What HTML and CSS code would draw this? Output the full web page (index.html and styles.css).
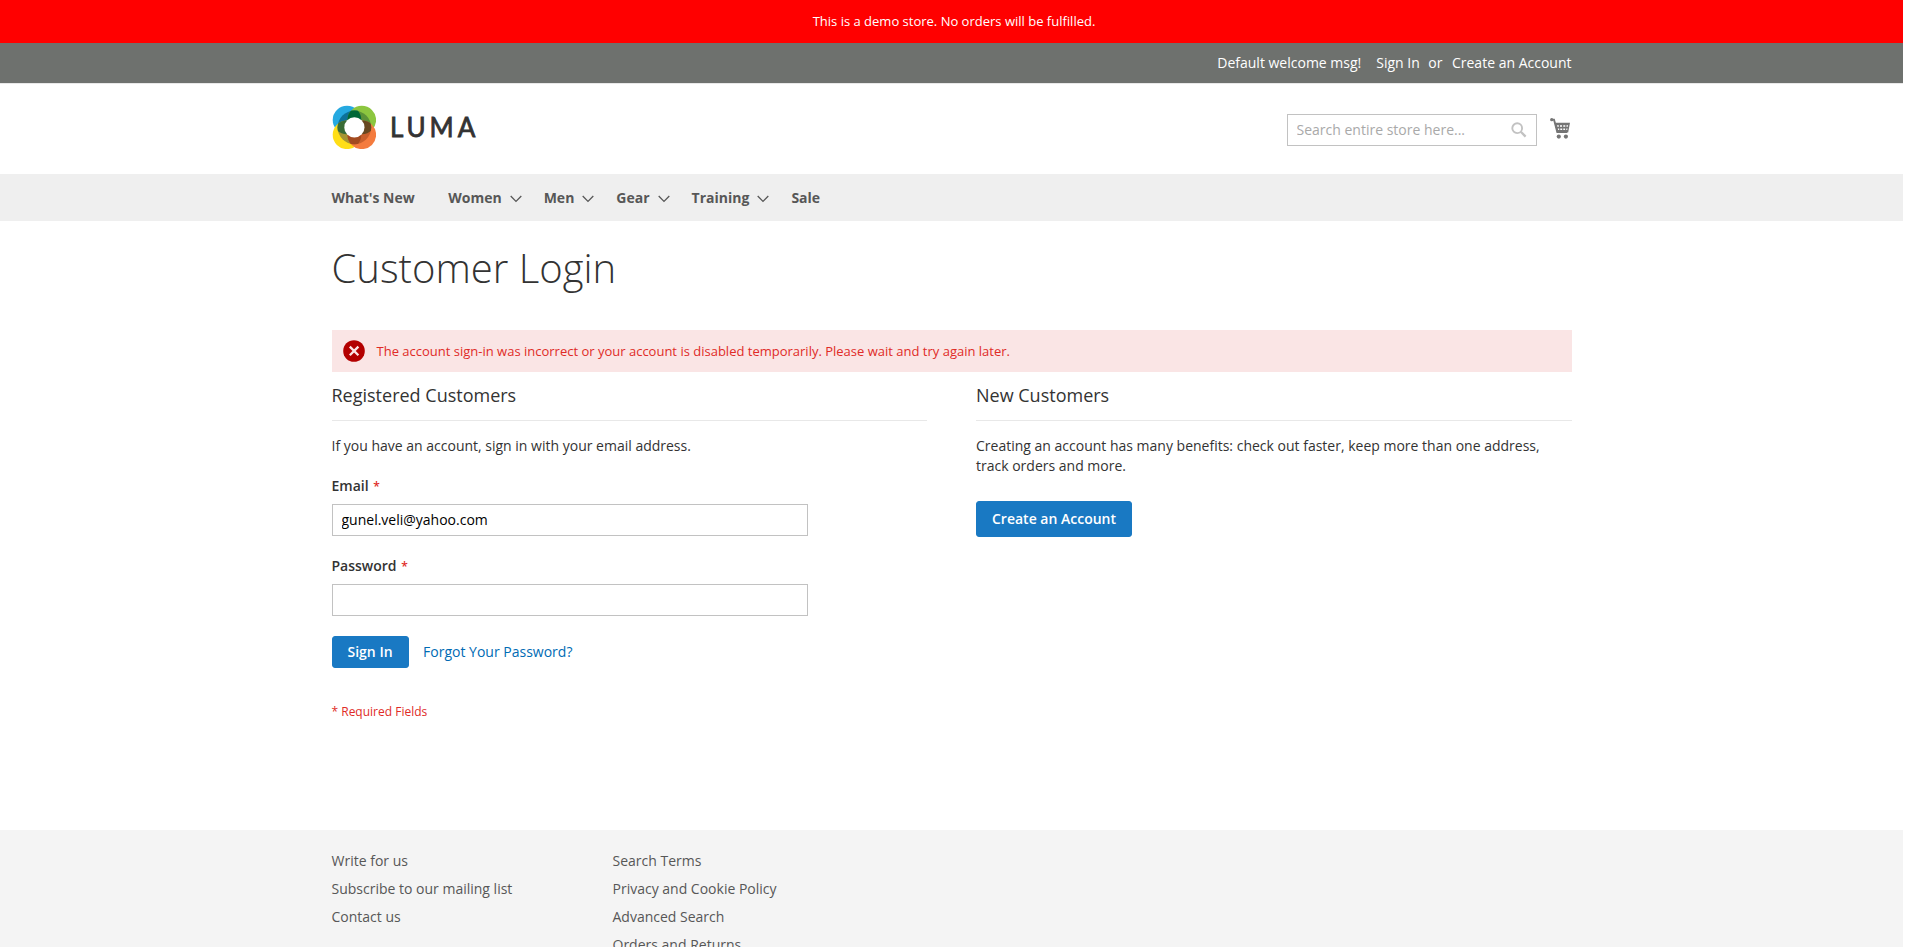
FILE: index.html
```html
<!DOCTYPE html>
<html lang="en">
<head>
<meta charset="utf-8">
<title>Customer Login</title>
<link rel="stylesheet" href="styles.css">
</head>
<body>
<div class="page">
  <div class="demo-notice">This is a demo store. No orders will be fulfilled.</div>
  <div class="panel">
    <ul class="container panel-links">
      <li class="welcome">Default welcome msg!</li>
      <li><a href="#">Sign In</a></li>
      <li class="or">or</li>
      <li><a href="#">Create an Account</a></li>
    </ul>
  </div>
  <header class="container header">
    <a class="logo" href="#" aria-label="Luma">
      <svg class="logo-mark" viewBox="0 0 44 44" width="44" height="44">
        <defs>
          <clipPath id="blue"><circle cx="15" cy="15" r="14.3"/></clipPath>
          <clipPath id="orange"><circle cx="29.8" cy="29.8" r="14.3"/></clipPath>
          <clipPath id="ring"><circle cx="22.4" cy="22.4" r="16.8"/></clipPath>
        </defs>
        <circle cx="15" cy="15" r="14.3" fill="#26a9e0"/>
        <circle cx="29.8" cy="15" r="14.3" fill="#8cc63f"/>
        <circle cx="15" cy="29.8" r="14.3" fill="#ffde17"/>
        <circle cx="29.8" cy="29.8" r="14.3" fill="#f47b3e"/>
        <g clip-path="url(#ring)">
          <circle cx="15" cy="15" r="14.3" fill="#0d7199"/>
          <circle cx="29.8" cy="15" r="14.3" fill="#5c9338"/>
          <circle cx="15" cy="29.8" r="14.3" fill="#a59532"/>
          <circle cx="29.8" cy="29.8" r="14.3" fill="#c95f2c"/>
          <g clip-path="url(#blue)">
            <circle cx="29.8" cy="15" r="14.3" fill="#006838"/>
            <circle cx="15" cy="29.8" r="14.3" fill="#396b35"/>
          </g>
          <g clip-path="url(#orange)">
            <circle cx="29.8" cy="15" r="14.3" fill="#684821"/>
            <circle cx="15" cy="29.8" r="14.3" fill="#a34b20"/>
          </g>
        </g>
        <circle cx="22.4" cy="22.4" r="10.1" fill="#fff"/>
      </svg>
      <span class="logo-text">LUMA</span>
    </a>
    <div class="header-tools">
      <div class="search">
        <input class="search-input" type="text" placeholder="Search entire store here...">
        <svg class="search-icon" viewBox="0 0 16 16" width="16" height="16"><circle cx="6.2" cy="6.2" r="4.9" fill="none" stroke="#c2c2c2" stroke-width="1.9"/><path d="M9.8 9.8 14.6 14.6" stroke="#c2c2c2" stroke-width="2.3"/></svg>
      </div>
      <svg class="cart-icon" viewBox="0 0 20 21" width="20" height="21">
        <path d="M1.5 1.6H4L7.3 14H17" fill="none" stroke="#757575" stroke-width="1.9"/>
        <circle cx="1.7" cy="1.7" r="1.6" fill="#757575"/>
        <path d="M4.5 4.8H20L18.2 14.6H7Z" fill="#757575"/>
        <path d="M7 7.2h1.8v1.5H7.4zM10 7.2h2v1.5h-2zM13.3 7.2h2v1.5h-2zM16.5 7.2h1.6l-.3 1.5h-1.3zM7.8 10.6h1.4v1.4H8.2zM10.3 10.6h1.9v1.4h-1.9zM13.3 10.6h1.8v1.4h-1.8zM16.3 10.6h1.2l-.3 1.4h-.9z" fill="#fff"/>
        <circle cx="8.8" cy="18.6" r="2.1" fill="#757575"/><circle cx="15.9" cy="18.6" r="2.1" fill="#757575"/>
      </svg>
    </div>
  </header>
  <nav class="nav">
    <ul class="container nav-list">
      <li class="nav-item first"><a href="#">What's New</a></li>
      <li class="nav-item parent"><a href="#">Women</a><svg class="chevron" viewBox="0 0 12 8" width="12" height="8"><path d="M.7 1 6 6.4 11.3 1"/></svg></li>
      <li class="nav-item parent"><a href="#">Men</a><svg class="chevron" viewBox="0 0 12 8" width="12" height="8"><path d="M.7 1 6 6.4 11.3 1"/></svg></li>
      <li class="nav-item parent"><a href="#">Gear</a><svg class="chevron" viewBox="0 0 12 8" width="12" height="8"><path d="M.7 1 6 6.4 11.3 1"/></svg></li>
      <li class="nav-item parent"><a href="#">Training</a><svg class="chevron" viewBox="0 0 12 8" width="12" height="8"><path d="M.7 1 6 6.4 11.3 1"/></svg></li>
      <li class="nav-item"><a href="#">Sale</a></li>
    </ul>
  </nav>
  <main class="container main">
    <h1 class="title">Customer Login</h1>
    <div class="message">
      <svg class="error-icon" viewBox="0 0 22 22" width="22" height="22"><circle cx="11" cy="11" r="10.8" fill="#b30000"/><path d="M6.8 6.6 15.4 15.2M15.4 6.6 6.8 15.2" stroke="#fae5e5" stroke-width="2.3"/></svg>
      <span>The account sign-in was incorrect or your account is disabled temporarily. Please wait and try again later.</span>
    </div>
    <div class="columns">
      <section class="block">
        <h2 class="block-title">Registered Customers</h2>
        <p class="note">If you have an account, sign in with your email address.</p>
        <form class="form">
          <label class="label" for="email">Email <span class="star">*</span></label>
          <input class="field" id="email" type="text" value="gunel.veli@yahoo.com">
          <label class="label" for="pass">Password <span class="star">*</span></label>
          <input class="field" id="pass" type="password">
          <div class="actions">
            <button class="button" type="button">Sign In</button>
            <a class="forgot" href="#">Forgot Your Password?</a>
          </div>
          <p class="required">* Required Fields</p>
        </form>
      </section>
      <section class="block">
        <h2 class="block-title">New Customers</h2>
        <p class="note">Creating an account has many benefits: check out faster, keep more than one address, track orders and more.</p>
        <a class="button create" href="#">Create an Account</a>
      </section>
    </div>
  </main>
  <footer class="footer">
    <div class="container footer-columns">
      <ul class="footer-links">
        <li><a href="#">Write for us</a></li>
        <li><a href="#">Subscribe to our mailing list</a></li>
        <li><a href="#">Contact us</a></li>
      </ul>
      <ul class="footer-links">
        <li><a href="#">Search Terms</a></li>
        <li><a href="#">Privacy and Cookie Policy</a></li>
        <li><a href="#">Advanced Search</a></li>
        <li><a href="#">Orders and Returns</a></li>
      </ul>
    </div>
  </footer>
</div>
</body>
</html>
```
FILE: styles.css
```css
* { box-sizing: border-box; }
html, body { margin: 0; height: 947px; overflow: hidden; background: #fff; }
body { font: 400 14px/20px "Open Sans", sans-serif; color: #333; }
ul, h1, h2, p { margin: 0; padding: 0; list-style: none; }
a { color: inherit; text-decoration: none; }
input, button { font: inherit; border-radius: 0; outline: 0; }
.page { width: 1903px; height: 947px; overflow: hidden; display: flex; flex-direction: column; }
.container { width: 1280px; margin: 0 auto; padding: 0 20px; }

.demo-notice { flex: none; height: 43px; line-height: 42px; background: #f00; color: #fff; font-size: 13px; text-align: center; padding-left: 5px; }
.panel { flex: none; height: 41px; background: #6e716e; border-bottom: 1px solid #e8e8e8; color: #fff; }
.panel-links { display: flex; justify-content: flex-end; line-height: 39px; }
.welcome { margin-right: 15px; }
.or { margin: 0 9.5px 0 8.5px; }

.header { flex: none; height: 90px; display: flex; justify-content: space-between; }
.logo { display: flex; margin: 21px 0 0 0.5px; }
.logo-text { font: 400 26px/44px Lato, sans-serif; -webkit-text-stroke: 0.8px #333; letter-spacing: 3.9px; margin-left: 14px; color: #333; }
.header-tools { display: flex; margin-top: 30px; }
.search { position: relative; width: 250px; height: 32px; }
.search-input { display: block; width: 250px; height: 32px; border: 1px solid #c2c2c2; padding: 0 35px 2px 9px; }
.search-input::placeholder { color: #a9a9a9; }
.search-icon { position: absolute; right: 10px; top: 8px; }
.cart-icon { margin: 4px 1.5px 0 13.5px; }

.nav { flex: none; height: 47px; background: #efefef; }
.nav-list { display: flex; line-height: 47px; font-weight: 700; color: #575757; }
.nav-item { margin-right: 22px; display: flex; align-items: center; }
.nav-item.first { margin-right: 33.5px; }
.chevron { margin: 2px 0 0 8px; fill: none; stroke: #575757; stroke-width: 1.3; }

.main { flex: none; height: 609px; }
.title { margin-top: 25px; font-weight: 300; font-size: 40px; line-height: 44px; }
.message { margin-top: 40px; height: 42px; background: #fae5e5; color: #e02b27; font-size: 13px; display: flex; align-items: center; gap: 12px; padding-left: 11px; }
.columns { display: flex; justify-content: space-between; }
.block { width: 595.5px; }
.block-title { height: 49px; padding-top: 13px; border-bottom: 1px solid #e8e8e8; font-weight: 400; font-size: 18px; line-height: 20px; }
.note { margin-top: 15px; }
.form { display: flex; flex-direction: column; align-items: flex-start; }
.label { height: 20px; font-weight: 600; margin: 20px 0 8px; }
.star { color: #e02b27; font-size: 12px; line-height: 12px; margin-left: 1px; }
.field { width: 476px; height: 32px; padding: 0 9px 2px; border: 1px solid #c2c2c2; color: #000; }
.actions { display: flex; align-items: center; margin-top: 20px; }
.button { display: block; height: 32px; padding: 0 15px; border: 1px solid #1979c3; border-radius: 3px; background: #1979c3; color: #fff; font-weight: 600; }
.forgot { color: #006bb4; margin-left: 14.5px; }
.required { color: #e02b27; font-size: 12px; margin-top: 34px; }
.create { width: 156px; height: 36px; line-height: 34px; margin-top: 25px; white-space: nowrap; }

.footer { flex: 1 0 auto; background: #f4f4f4; }
.footer-columns { display: flex; padding-top: 21px; }
.footer-links { width: 281px; display: flex; flex-direction: column; gap: 8px; color: #575757; }
```
